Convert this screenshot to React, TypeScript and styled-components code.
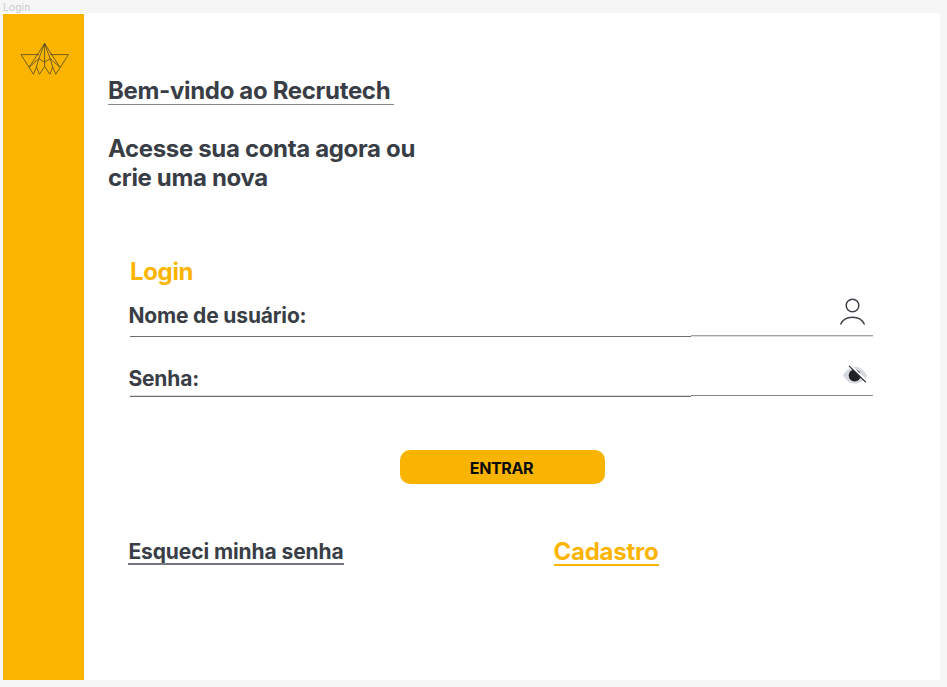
import React from "react";
import styled, { createGlobalStyle } from "styled-components";

const ink = "#393e46";
const amber = "#fbb500";

const GlobalStyle = createGlobalStyle`
  * { box-sizing: border-box; }
  body { margin: 0; background: #f6f6f6; font-family: Inter, "Liberation Sans", sans-serif; overflow: hidden; }
`;

const Canvas = styled.div`
  width: 947px;
  height: 687px;
  padding-left: 3px;
`;

const FrameLabel = styled.div`
  height: 13px;
  font-size: 10px;
  line-height: 14px;
  letter-spacing: 0.25px;
  color: #c9c9c9;
`;

const Frame = styled.main`
  display: flex;
  width: 937px;
  height: 667px;
  background: #fff;
`;

const Sidebar = styled.aside`
  width: 81px;
  height: 666px;
  margin-top: 1px;
  padding: 28px 0 0 17px;
  background: ${amber};
`;

const Content = styled.div`
  flex: 1;
  padding: 63px 0 0 24px;
`;

const Title = styled.h1`
  width: 286px;
  height: 29px;
  margin: 0;
  border-bottom: 1px solid #85878f;
  color: ${ink};
  font-size: 24px;
  font-weight: 700;
  letter-spacing: -0.33px;
  line-height: 29px;
  white-space: nowrap;
`;

const Subtitle = styled.h2`
  width: 320px;
  margin: 29px 0 0;
  color: ${ink};
  font-size: 24px;
  font-weight: 700;
  letter-spacing: -0.34px;
  line-height: 29px;
`;

const Form = styled.form`
  width: 745px;
  margin: 65px 0 0 20px;
`;

const FormTitle = styled.h3`
  margin: 0 0 0 2px;
  color: ${amber};
  font-size: 24px;
  font-weight: 700;
  letter-spacing: -0.35px;
  line-height: 29px;
`;

const Field = styled.div<{ $height: number; $offset: number }>`
  display: flex;
  flex-direction: column;
  justify-content: space-between;
  height: ${(p) => p.$height}px;
  padding-top: ${(p) => p.$offset}px;
`;

const FieldRow = styled.div`
  display: flex;
  justify-content: space-between;
  align-items: center;
  height: 29px;
`;

const FieldLabel = styled.label`
  padding-left: 0.4px;
  color: ${ink};
  font-size: 21px;
  font-weight: 700;
  letter-spacing: -0.16px;
  line-height: 27px;
`;

const Rule = styled.div`
  display: flex;
  height: 2px;
  margin-left: 2px;
`;

const RuleStart = styled.span<{ $edge: string }>`
  width: 561px;
  border-top: 1px solid ${(p) => p.$edge};
  border-bottom: 1px solid #6b6b74;
`;

const RuleEnd = styled.span<{ $tone: string; $edge: string }>`
  flex: 1;
  border-top: 1px solid ${(p) => p.$tone};
  border-bottom: 1px solid ${(p) => p.$edge};
`;

const IconSlot = styled.span<{ $right: number; $lift: number }>`
  display: flex;
  margin-right: ${(p) => p.$right}px;
  padding-bottom: ${(p) => p.$lift}px;
`;

const SubmitButton = styled.button`
  display: block;
  width: 205px;
  height: 34px;
  margin: 53px 0 0 272px;
  padding: 2px 2px 0 0;
  border: 0;
  border-radius: 10px;
  background: #f8b400;
  color: #0b0b0b;
  font: 700 16px/32px Inter, sans-serif;
  letter-spacing: -0.35px;
`;

const Links = styled.nav`
  display: flex;
  align-items: flex-start;
  margin: 53px 0 0 20px;
`;

const TextLink = styled.a<{ $color: string; $line: string; $size: number; $width: number }>`
  width: ${(p) => p.$width}px;
  height: 28px;
  padding-left: 0.4px;
  border-bottom: 2px solid ${(p) => p.$line};
  color: ${(p) => p.$color};
  font-size: ${(p) => p.$size}px;
  font-weight: 700;
  letter-spacing: -0.1px;
  line-height: 30px;
  white-space: nowrap;

  & + & { height: 28.5px; margin-left: 209.5px; padding-left: 0; letter-spacing: -0.25px; line-height: 29px; }
`;

const Logo = () => (
  <svg width="50" height="34" viewBox="20 41.7 50 34" fill="none" stroke="#4b4428" strokeWidth="0.75" strokeLinejoin="round">
    <path d="M39 54.3H21L33.4 74L36.5 66.6L39.4 74L44.6 66L49.8 74L52.7 66.6L55.8 74L68.4 54.3H50.2" />
    <path d="M44.6 43.2L29.3 66.8L38.8 58.4L44.6 62L50.2 58.4L59.9 66.8Z" />
    <path d="M44.6 43.2V66M44.6 43.2L38.8 58.4L36.5 66.6M44.6 43.2L50.2 58.4L52.7 66.6" />
  </svg>
);

const UserIcon = () => (
  <svg width="26" height="28" viewBox="0 0 26 28" fill="none" stroke="#3f4048" strokeWidth="1.5" strokeLinecap="round">
    <circle cx="12.5" cy="7.5" r="6.3" />
    <path d="M.8 26C2.8 21.7 7.3 19.2 12.5 19.2s9.7 2.5 11.7 6.8" />
  </svg>
);

const HiddenIcon = () => (
  <svg width="26" height="20" viewBox="0 0 26 20" fill="none">
    <path d="M1 10.5Q6 1.8 13 1.8T25 10.5Q20 18.5 13 18.5T1 10.5Z" fill="#d3d9df" />
    <circle cx="12.7" cy="10.5" r="6" fill="#202124" />
    <path d="M8.8 1L25.3 16.5" stroke="#fff" strokeWidth="2.2" />
    <path d="M7 0.9L23.8 17.2" stroke="#303137" strokeWidth="1.2" />
  </svg>
);

export default function App() {
  return (
    <>
      <GlobalStyle />
      <Canvas>
        <FrameLabel>Login</FrameLabel>
        <Frame>
          <Sidebar><Logo /></Sidebar>
          <Content>
            <Title>Bem-vindo ao Recrutech</Title>
            <Subtitle>Acesse sua conta agora ou<br />crie uma nova</Subtitle>
            <Form onSubmit={(event) => event.preventDefault()}>
              <FormTitle>Login</FormTitle>
              <Field $height={51} $offset={15}>
                <FieldRow>
                  <FieldLabel>Nome de usuário:</FieldLabel>
                  <IconSlot $right={7} $lift={8}><UserIcon /></IconSlot>
                </FieldRow>
                <Rule><RuleStart $edge="#fff" /><RuleEnd $tone="#a3a3a8" $edge="#dedee0" /></Rule>
              </Field>
              <Field $height={60} $offset={27}>
                <FieldRow>
                  <FieldLabel>Senha:</FieldLabel>
                  <IconSlot $right={5} $lift={7}><HiddenIcon /></IconSlot>
                </FieldRow>
                <Rule><RuleStart $edge="#dedee0" /><RuleEnd $tone="#85858c" $edge="#fff" /></Rule>
              </Field>
              <SubmitButton type="submit">ENTRAR</SubmitButton>
            </Form>
            <Links>
              <TextLink $color={ink} $line="#74777e" $size={21} $width={216}>Esqueci minha senha</TextLink>
              <TextLink $color={amber} $line={amber} $size={24} $width={105}>Cadastro</TextLink>
            </Links>
          </Content>
        </Frame>
      </Canvas>
    </>
  );
}
